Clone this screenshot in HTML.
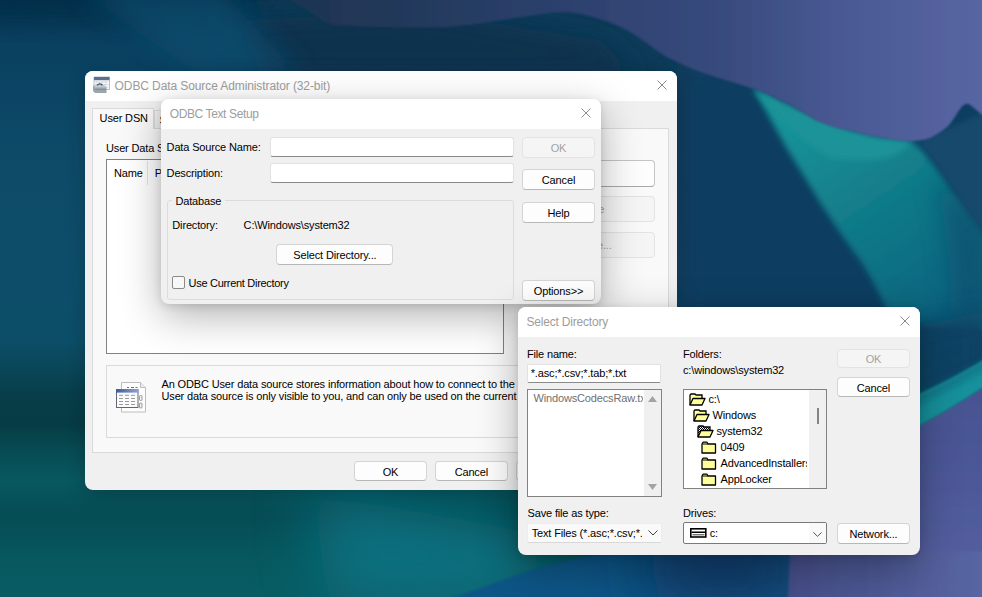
<!DOCTYPE html>
<html><head><meta charset="utf-8">
<style>
html,body{margin:0;padding:0;width:982px;height:597px;overflow:hidden;background:#0d3a55;}
#wp{position:absolute;left:0;top:0;width:982px;height:597px;}
.dlg{position:absolute;background:#f0f0f0;border-radius:8px;overflow:hidden;}
.tb{position:absolute;left:0;top:0;right:0;height:30px;background:#fff;}
.t{position:absolute;font-family:"Liberation Sans",sans-serif;font-size:11px;letter-spacing:-0.15px;line-height:13px;white-space:nowrap;color:#000;}
.tt{position:absolute;font-family:"Liberation Sans",sans-serif;font-size:12px;letter-spacing:-0.1px;line-height:14px;white-space:nowrap;color:#9d9d9d;}
.btn{position:absolute;box-sizing:border-box;display:flex;align-items:center;justify-content:center;padding-top:1.8px;line-height:13px !important;background:#fdfdfd;border:1px solid #d4d4d4;border-bottom-color:#b8b8b8;border-radius:4px;font-family:"Liberation Sans",sans-serif;font-size:11px;letter-spacing:-0.15px;text-align:center;color:#000;white-space:nowrap;}
.btn.dis{background:#f5f5f5;border-color:#e3e3e3;color:#a3a3a3;}
.inp{position:absolute;box-sizing:border-box;background:#fff;border:1px solid #e2e2e2;border-bottom:1px solid #8a8a8a;border-radius:3px;}
.x{position:absolute;width:10px;height:10px;}
</style></head>
<body>
<svg id="wp" width="982" height="597" viewBox="0 0 982 597">
  <defs>
    <linearGradient id="gleft" x1="0" y1="0" x2="0" y2="597" gradientUnits="userSpaceOnUse">
      <stop offset="0" stop-color="#05304a"/>
      <stop offset="0.067" stop-color="#0a4060"/>
      <stop offset="0.134" stop-color="#0b4363"/>
      <stop offset="0.25" stop-color="#0d4a68"/>
      <stop offset="0.42" stop-color="#0e4d6a"/>
      <stop offset="0.57" stop-color="#0c4e68"/>
      <stop offset="0.62" stop-color="#0a4658"/>
      <stop offset="0.66" stop-color="#073e4a"/>
      <stop offset="0.71" stop-color="#063c44"/>
      <stop offset="0.75" stop-color="#074a52"/>
      <stop offset="0.804" stop-color="#085860"/>
      <stop offset="0.863" stop-color="#064c54"/>
      <stop offset="0.938" stop-color="#07585f"/>
      <stop offset="1" stop-color="#085c64"/>
    </linearGradient>
    <linearGradient id="gsky" x1="250" y1="0" x2="982" y2="0" gradientUnits="userSpaceOnUse">
      <stop offset="0" stop-color="#1d3350"/>
      <stop offset="0.2" stop-color="#22395a"/>
      <stop offset="0.45" stop-color="#2e4270"/>
      <stop offset="0.62" stop-color="#36497b"/>
      <stop offset="0.82" stop-color="#4a5a94"/>
      <stop offset="1" stop-color="#5866a3"/>
    </linearGradient>
    <linearGradient id="gteal" x1="800" y1="110" x2="940" y2="320" gradientUnits="userSpaceOnUse">
      <stop offset="0" stop-color="#179399"/>
      <stop offset="0.4" stop-color="#127f8b"/>
      <stop offset="1" stop-color="#0e637e"/>
    </linearGradient>
    <linearGradient id="gpurp" x1="0" y1="380" x2="0" y2="597" gradientUnits="userSpaceOnUse">
      <stop offset="0" stop-color="#465290"/>
      <stop offset="1" stop-color="#5661a2"/>
    </linearGradient>
    <linearGradient id="gbot" x1="790" y1="0" x2="982" y2="0" gradientUnits="userSpaceOnUse">
      <stop offset="0" stop-color="#454e88"/>
      <stop offset="1" stop-color="#5866a3"/>
    </linearGradient>
    <filter id="b30" x="-50%" y="-50%" width="200%" height="200%"><feGaussianBlur stdDeviation="30"/></filter>
    <filter id="b12" x="-50%" y="-50%" width="200%" height="200%"><feGaussianBlur stdDeviation="12"/></filter>
    <filter id="b4" x="-50%" y="-50%" width="200%" height="200%"><feGaussianBlur stdDeviation="3"/></filter>
    <filter id="b1" x="-50%" y="-50%" width="200%" height="200%"><feGaussianBlur stdDeviation="1"/></filter>
  </defs>
  <rect width="982" height="597" fill="url(#gleft)"/>
  <!-- darker navy fabric towards top middle / right -->
  <path d="M230,-20 L700,-20 L720,60 L850,150 L900,330 L700,330 L600,100 L300,80 Z" fill="#0a3a58" filter="url(#b30)"/>
  <path d="M240,20 L420,10 L600,40 L640,75 L260,75 Z" fill="#07314d" filter="url(#b12)"/>
  <path d="M-20,-20 L200,-20 L180,18 L-20,22 Z" fill="#062f4a" opacity="0.5" filter="url(#b12)"/>
  <!-- light streak top-left -->
  <path d="M80,-10 L220,-10 L300,75 L200,75 Z" fill="#0e4d6e" opacity="0.7" filter="url(#b12)"/>
  <!-- right fabric region -->
  <rect x="677" y="60" width="320" height="320" fill="#0d3e60" filter="url(#b12)"/>
  <!-- teal ridge -->
  <path d="M753,88 C770,98 790,108 817,121 C840,130 870,138 911,141 L923,150 C935,165 950,185 971,217 L990,240 L990,330 L895,325 C880,295 870,275 860,260 C845,240 835,225 821,204 C810,185 798,167 786,147 C775,128 765,108 753,88 Z" fill="url(#gteal)" filter="url(#b4)"/>
  <path d="M753,88 C790,105 830,128 880,138 L912,141 C895,165 860,160 830,158 C800,140 770,110 753,88 Z" fill="#1a9398" filter="url(#b4)"/>
  <path d="M935,175 L990,225 L990,320 L950,320 C955,280 945,220 935,175 Z" fill="#0e4f70" opacity="0.75" filter="url(#b12)"/>
  <!-- navy right of ridge near peak -->
  <path d="M925,138 L990,110 L990,238 C975,222 960,200 950,185 C940,170 930,155 918,142 Z" fill="#134a6c" filter="url(#b4)"/>
  <!-- sky -->
  <path d="M250,-5 L290,0 C310,10 320,20 330,24 C370,28 420,28 447,27 C500,22 540,12 567,12 C590,14 610,22 627,30 C645,40 660,55 677,62 C690,68 700,72 708,74.5 C725,80 745,86 758,90 C770,95 780,100 786,102.5 C800,110 810,117 817,121 C830,126 840,129 848,130 C860,133 870,136 879,137 C890,139 900,141 910,141 C920,141 928,139 932,137 C940,133 946,128 950,124 C956,116 960,108 963,105.6 C965,103.5 968,103.5 969,104 C973,107 978,111 982,115 L990,115 L990,-5 Z" fill="url(#gsky)" filter="url(#b1)"/>
  <!-- right strip purple + teal band -->
  <path d="M880,335 L990,310 L990,370 C960,385 930,400 880,420 Z" fill="#0d4264" filter="url(#b12)"/>
  <path d="M900,434 C930,420 960,402 990,382 L990,600 L900,600 Z" fill="url(#gpurp)" filter="url(#b1)"/>
  <path d="M900,402 C930,390 960,374 990,356 L990,383 C960,403 930,421 900,436 Z" fill="#15909a" filter="url(#b1)"/>
  <path d="M900,402 C930,390 960,374 990,356 L990,366 C960,384 930,400 900,414 Z" fill="#0f6a80" opacity="0.6" filter="url(#b4)"/>
  <!-- bottom strip -->
  <path d="M310,495 C380,505 470,520 560,540 L520,600 L330,600 Z" fill="#10788a" opacity="0.8" filter="url(#b30)"/>
  <path d="M440,602 C480,590 520,572 560,562 C590,556 610,553 625,553 L800,552 L790,602 Z" fill="#0b5486" filter="url(#b1)"/>
  <path d="M640,540 L800,540 L790,602 L660,602 Z" fill="#0a3662" filter="url(#b30)"/>
  <path d="M790,552 L990,552 L990,600 L788,600 Z" fill="url(#gbot)" filter="url(#b1)"/>
</svg>

<svg width="0" height="0" style="position:absolute">
  <defs>
    <pattern id="dith" width="2" height="2" patternUnits="userSpaceOnUse"><rect width="2" height="2" fill="#fff"/><rect width="1" height="1" fill="#000"/><rect x="1" y="1" width="1" height="1" fill="#000"/></pattern>
    <symbol id="fopen" viewBox="0 0 17 13">
      <path d="M1,12 L1,2 L2,1 L6,1 L7,2 L13,2 L13,5.5" fill="#ffff99" stroke="#000" stroke-width="1.3"/>
      <path d="M1,12 L4,5.5 L16,5.5 L13,12 Z" fill="#ffff99" stroke="#000" stroke-width="1.3" stroke-linejoin="round"/>
    </symbol>
    <symbol id="fsel" viewBox="0 0 17 13">
      <path d="M1,12 L1,2 L2,1 L6,1 L7,2 L13,2 L13,5.5" fill="url(#dith)" stroke="#000" stroke-width="1.3"/>
      <path d="M1,12 L4,5.5 L16,5.5 L13,12 Z" fill="#ffff99" stroke="#000" stroke-width="1.3" stroke-linejoin="round"/>
    </symbol>
    <symbol id="fclosed" viewBox="0 0 16 13">
      <path d="M1,3 L2,1.2 L6,1.2 L7,3 L14.5,3 L14.5,12 L1,12 Z" fill="#ffff99" stroke="#000" stroke-width="1.3" stroke-linejoin="round"/>
      <path d="M1.5,3 H7" stroke="#000" stroke-width="1"/>
    </symbol>
  </defs>
</svg>
<!-- ============ ADMIN DIALOG ============ -->
<div class="dlg" id="admin" style="left:85px;top:71px;width:592px;height:419px;box-shadow:0 4px 18px rgba(0,0,0,0.22);">
  <div class="tb"></div>
  <svg style="position:absolute;left:7px;top:5px" width="18" height="18" viewBox="0 0 18 18">
    <rect x="2" y="1" width="15.5" height="12.5" fill="#f4f6f8" stroke="#a9b3bf" stroke-width="0.8"/>
    <rect x="2" y="1" width="15.5" height="3.2" fill="#5d6f8f"/>
    <path d="M3.5,6 H16 M3.5,8.5 H16 M3.5,11 H16" stroke="#b7c0cb" stroke-width="1" stroke-dasharray="2 1"/>
    <path d="M1,9.5 L12.5,9.5 L14.5,11.5 L14.5,17 L3,17 L1,15 Z" fill="#9aa5ae"/>
    <path d="M1,9.5 L12.5,9.5 L14.5,11.5 L3,11.5 Z" fill="#c3cbd2"/>
    <path d="M3,13.5 H14.5" stroke="#7c8790" stroke-width="0.8"/>
    <path d="M5.5,9.5 C5.5,7.2 10,7.2 10,9.5" stroke="#4b5157" stroke-width="1.3" fill="none"/>
  </svg>
  <div class="tt" style="left:29.6px;top:8px;">ODBC Data Source Administrator (32-bit)</div>
  <svg class="x" style="left:572px;top:9px" viewBox="0 0 10 10"><path d="M0.5,0.5 L9.5,9.5 M9.5,0.5 L0.5,9.5" stroke="#8a8a8a" stroke-width="1"/></svg>

  <!-- tabs -->
  <div style="position:absolute;left:68.6px;top:39.2px;width:80px;height:19px;background:#f0f0f0;border:1px solid #d9d9d9;border-bottom:none;"></div>
  <div style="position:absolute;left:6.6px;top:57.4px;width:577px;height:325px;box-sizing:border-box;background:#f9f9f9;border:1px solid #dadada;"></div>
  <div style="position:absolute;left:6.8px;top:37.3px;width:62.6px;height:21px;box-sizing:border-box;background:#f9f9f9;border:1px solid #dadada;border-bottom:none;"></div>
  <div class="t" style="left:14.6px;top:41px;">User DSN</div>
  <div class="t" style="left:74.5px;top:42.5px;">System DSN</div>
  <div class="t" style="left:21px;top:70.6px;">User Data Sources:</div>

  <!-- list view -->
  <div style="position:absolute;left:21.1px;top:88.2px;width:397.6px;height:195px;box-sizing:border-box;background:#fff;border:1px solid #828282;"></div>
  <div style="position:absolute;left:61.8px;top:90.3px;width:1px;height:23.5px;background:#e3e3e3;"></div>
  <div class="t" style="left:28.9px;top:96px;">Name</div>
  <div class="t" style="left:69.8px;top:96px;">Platform</div>

  <!-- right buttons -->
  <div class="btn" style="left:428px;top:89px;width:142.3px;height:26.8px;line-height:24.8px;border-color:#c4c4c4;border-bottom-color:#a8a8a8;">Add...</div>
  <div class="btn dis" style="left:428px;top:125.2px;width:142.3px;height:25.8px;line-height:23.8px;">Remove</div>
  <div class="btn dis" style="left:428px;top:161px;width:142.3px;height:26px;line-height:24px;">Configure...</div>

  <!-- info box -->
  <div style="position:absolute;left:21px;top:293.5px;width:549px;height:73.5px;box-sizing:border-box;background:#f9f9f9;border:1px solid #dadada;"></div>
  <svg style="position:absolute;left:30px;top:310px" width="32" height="32" viewBox="0 0 32 32">
    <defs><linearGradient id="gband" x1="0" y1="0" x2="1" y2="0"><stop offset="0" stop-color="#3f5c9a"/><stop offset="1" stop-color="#8fa3d3"/></linearGradient></defs>
    <path d="M6.5,1.5 L25.5,1.5 L30.5,6.5 L30.5,31 L6.5,31 Z" fill="#fdfdfd" stroke="#bdbdbd" stroke-width="1"/>
    <path d="M25.5,1.5 L25.5,6.5 L30.5,6.5" fill="#eeeeee" stroke="#bdbdbd"/>
    <path d="M12,6.5 H14 M16,6.5 H19 M20.5,6.5 H22.5" stroke="#707070" stroke-width="1"/>
    <rect x="24.5" y="14.5" width="2.5" height="5" rx="1" fill="#f4f4f4" stroke="#8c8c8c" stroke-width="0.9"/>
    <rect x="24.5" y="22" width="2.5" height="5" rx="1" fill="#f4f4f4" stroke="#8c8c8c" stroke-width="0.9"/>
    <rect x="1.5" y="8.5" width="21.5" height="18" fill="#fbfbfb" stroke="#5f6676" stroke-width="1"/>
    <rect x="1" y="8" width="22.5" height="3.6" fill="url(#gband)"/>
    <path d="M4,14.3 H8 M10,14.3 H14 M16,14.3 H20 M4,17.5 H8 M10,17.5 H14 M16,17.5 H20 M4,20.5 H8 M10,20.5 H14 M16,20.5 H20 M4,23.5 H8 M10,23.5 H14 M16,23.5 H20" stroke="#9a9a9a" stroke-width="1"/>
  </svg>
  <div class="t" style="left:76.5px;top:306.5px;">An ODBC User data source stores information about how to connect to the indicated data provider.  A</div>
  <div class="t" style="left:76.5px;top:319px;">User data source is only visible to you, and can only be used on the current machine.</div>

  <!-- bottom buttons -->
  <div class="btn" style="left:269.3px;top:390.3px;width:72.4px;height:20.1px;line-height:18px;">OK</div>
  <div class="btn" style="left:350px;top:390.3px;width:72.6px;height:20.1px;line-height:18px;">Cancel</div>
  <div class="btn" style="left:431px;top:390.3px;width:72.6px;height:20.1px;line-height:18px;">Apply</div>
  <div class="btn" style="left:512px;top:390.3px;width:72.6px;height:20.1px;line-height:18px;">Help</div>
</div>

<!-- ============ TEXT SETUP DIALOG ============ -->
<div class="dlg" id="setup" style="left:161px;top:99px;width:440px;height:205px;box-shadow:0 12px 40px rgba(0,0,0,0.30), 0 2px 8px rgba(0,0,0,0.12);">
  <div class="tb"></div>
  <div class="tt" style="left:8.7px;top:8.4px;letter-spacing:-0.38px;">ODBC Text Setup</div>
  <svg class="x" style="left:419.7px;top:9px" viewBox="0 0 10 10"><path d="M0.5,0.5 L9.5,9.5 M9.5,0.5 L0.5,9.5" stroke="#8a8a8a" stroke-width="1"/></svg>

  <div class="t" style="left:5.6px;top:42px;">Data Source Name:</div>
  <div class="inp" style="left:108.6px;top:38.3px;width:244.6px;height:19.6px;"></div>
  <div class="t" style="left:5.6px;top:67.5px;">Description:</div>
  <div class="inp" style="left:108.6px;top:64.3px;width:244.6px;height:19.6px;"></div>

  <div style="position:absolute;left:5.5px;top:101px;width:347.5px;height:99.5px;box-sizing:border-box;border:1px solid #dcdcdc;border-radius:3px;"></div>
  <div class="t" style="left:11px;top:96px;background:#f0f0f0;padding:0 3.4px;">Database</div>
  <div class="t" style="left:11.3px;top:119.5px;">Directory:</div>
  <div class="t" style="left:82.6px;top:119.5px;">C:\Windows\system32</div>
  <div class="btn" style="left:115.4px;top:145.2px;width:117px;height:20.4px;line-height:18.4px;">Select Directory...</div>
  <div style="position:absolute;left:11.3px;top:176.8px;width:13px;height:13px;box-sizing:border-box;background:#f8f8f8;border:1px solid #8a8a8a;border-radius:2px;"></div>
  <div class="t" style="left:27.6px;top:177.7px;letter-spacing:-0.3px;">Use Current Directory</div>

  <div class="btn dis" style="left:361px;top:38px;width:73px;height:20.5px;line-height:18px;">OK</div>
  <div class="btn" style="left:361px;top:70px;width:73px;height:20.5px;line-height:18px;">Cancel</div>
  <div class="btn" style="left:361px;top:103px;width:73px;height:20.5px;line-height:18px;">Help</div>
  <div class="btn" style="left:361px;top:181px;width:73px;height:20.5px;line-height:18px;">Options&gt;&gt;</div>
</div>

<!-- ============ SELECT DIRECTORY DIALOG ============ -->
<div class="dlg" id="seldir" style="left:518px;top:307px;width:402px;height:248px;box-shadow:0 12px 40px rgba(0,0,0,0.30), 0 2px 8px rgba(0,0,0,0.12);">
  <div class="tb"></div>
  <div class="tt" style="left:8.5px;top:8.4px;letter-spacing:-0.2px;">Select Directory</div>
  <svg class="x" style="left:382px;top:9px" viewBox="0 0 10 10"><path d="M0.5,0.5 L9.5,9.5 M9.5,0.5 L0.5,9.5" stroke="#8a8a8a" stroke-width="1"/></svg>

  <div class="t" style="left:8.9px;top:41px;">File name:</div>
  <div class="inp" style="left:9px;top:56.5px;width:134px;height:19px;border-radius:2px;"></div>
  <div class="t" style="left:12.7px;top:60px;">*.asc;*.csv;*.tab;*.txt</div>

  <div style="position:absolute;left:9.2px;top:82px;width:134.4px;height:107.6px;box-sizing:border-box;background:#fff;border:1px solid #828282;overflow:hidden;">
    <div style="position:absolute;right:0;top:0;width:17px;height:106px;background:#f0f0f0;"></div>
    <svg style="position:absolute;right:4px;top:6px" width="9" height="6" viewBox="0 0 9 6"><path d="M0,6 L4.5,0 L9,6 Z" fill="#a3a3a3"/></svg>
    <svg style="position:absolute;right:4px;top:94px" width="9" height="6" viewBox="0 0 9 6"><path d="M0,0 L4.5,6 L9,0 Z" fill="#a3a3a3"/></svg>
    <div class="t" style="left:5.3px;top:1.6px;color:#707070;width:110px;overflow:hidden;">WindowsCodecsRaw.txt</div>
  </div>

  <div class="t" style="left:9.5px;top:199.8px;">Save file as type:</div>
  <div style="position:absolute;left:9px;top:216.2px;width:134.5px;height:19.8px;box-sizing:border-box;background:#fafafa;border:1px solid #ececec;border-bottom-color:#d8d8d8;border-radius:2px;"></div>
  <div class="t" style="left:13.7px;top:219.7px;width:110px;overflow:hidden;">Text Files (*.asc;*.csv;*.tab;*.txt)</div>
  <svg style="position:absolute;left:130px;top:223px" width="10" height="6" viewBox="0 0 10 6"><path d="M0.5,0.5 L5,5 L9.5,0.5" stroke="#444" fill="none"/></svg>

  <div class="t" style="left:165px;top:40.7px;">Folders:</div>
  <div class="t" style="left:165px;top:56.6px;">c:\windows\system32</div>

  <div style="position:absolute;left:165.2px;top:82px;width:143.6px;height:99.5px;box-sizing:border-box;background:#fff;border:1px solid #828282;overflow:hidden;">
    <div style="position:absolute;right:0;top:0;width:17px;height:98px;background:#f0f0f0;"></div>
    <div style="position:absolute;left:133px;top:18px;width:2px;height:16px;background:#858585;"></div>
    <svg style="position:absolute;left:4.8px;top:3px" width="17" height="13" viewBox="0 0 17 13"><use href="#fopen"/></svg>
    <svg style="position:absolute;left:8.8px;top:19px" width="17" height="13" viewBox="0 0 17 13"><use href="#fopen"/></svg>
    <svg style="position:absolute;left:12.8px;top:35px" width="17" height="13" viewBox="0 0 17 13"><use href="#fsel"/></svg>
    <svg style="position:absolute;left:17px;top:51px" width="16" height="13" viewBox="0 0 16 13"><use href="#fclosed"/></svg>
    <svg style="position:absolute;left:17px;top:67px" width="16" height="13" viewBox="0 0 16 13"><use href="#fclosed"/></svg>
    <svg style="position:absolute;left:17px;top:83px" width="16" height="13" viewBox="0 0 16 13"><use href="#fclosed"/></svg>
    <div class="t" style="left:24.3px;top:2.5px;">c:\</div>
    <div class="t" style="left:28.3px;top:18.5px;">Windows</div>
    <div class="t" style="left:32.3px;top:34.5px;">system32</div>
    <div class="t" style="left:36.3px;top:50.5px;">0409</div>
    <div class="t" style="left:36.3px;top:66.5px;width:87px;overflow:hidden;">AdvancedInstallers</div>
    <div class="t" style="left:36.3px;top:82.5px;">AppLocker</div>
  </div>

  <div class="t" style="left:165px;top:199.5px;">Drives:</div>
  <div style="position:absolute;left:165.2px;top:215.3px;width:143.5px;height:21.6px;box-sizing:border-box;background:#fff;border:1px solid #7a7a7a;border-radius:2px;"></div>
  <div style="position:absolute;left:290.5px;top:216.3px;width:17.2px;height:19.6px;background:#f9f9f9;"></div>
  <svg style="position:absolute;left:295.3px;top:224.5px" width="9" height="5" viewBox="0 0 9 5"><path d="M0.4,0.4 L4.5,4.4 L8.6,0.4" stroke="#555" stroke-width="1" fill="none"/></svg>
  <svg style="position:absolute;left:171.5px;top:220.5px" width="17" height="10" viewBox="0 0 17 10">
    <rect x="0.8" y="0.8" width="15" height="8.2" fill="#fff" stroke="#000" stroke-width="1.6"/>
    <path d="M1.5,4.2 H15.5" stroke="#000" stroke-width="1.6"/>
    <path d="M2.5,6.8 H14.5" stroke="#222" stroke-width="0.9"/>
  </svg>
  <div class="t" style="left:191.7px;top:219.7px;">c:</div>

  <div class="btn dis" style="left:319.3px;top:41.5px;width:72.3px;height:19.8px;line-height:18px;">OK</div>
  <div class="btn" style="left:319.3px;top:70.3px;width:72.3px;height:20.1px;line-height:18px;">Cancel</div>
  <div class="btn" style="left:319.3px;top:216px;width:72.3px;height:20.5px;line-height:18.5px;">Network...</div>
</div>
</body></html>
